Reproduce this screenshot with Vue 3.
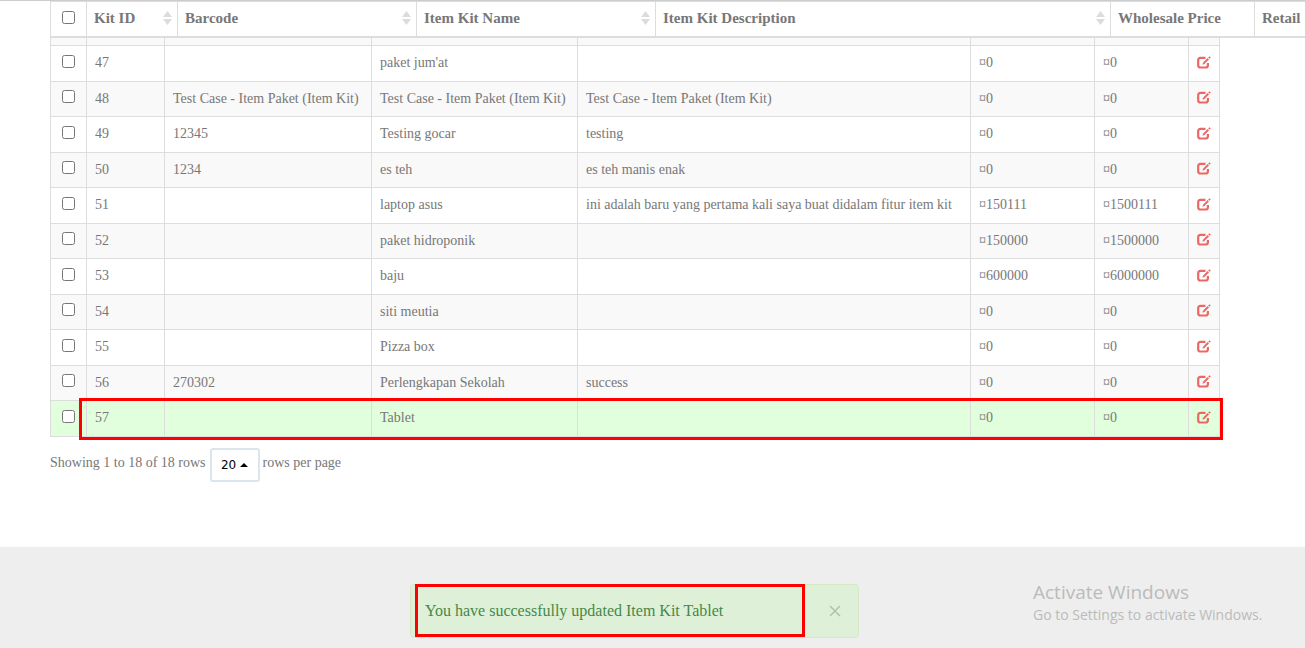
<script setup>
import { ref } from 'vue'

const columns = [
  { label: 'Kit ID', cls: 'h-id', sortable: true },
  { label: 'Barcode', cls: 'h-barcode', sortable: true },
  { label: 'Item Kit Name', cls: 'h-name', sortable: true },
  { label: 'Item Kit Description', cls: 'h-desc', sortable: true },
  { label: 'Wholesale Price', cls: 'h-whole', sortable: false },
  { label: 'Retail', cls: 'h-retail', sortable: false }
]

const test = 'Test Case - Item Paket (Item Kit)'
const rows = ref([
  { id: 47, barcode: '', name: "paket jum'at", desc: '', whole: '¤0', retail: '¤0' },
  { id: 48, barcode: test, name: test, desc: test, whole: '¤0', retail: '¤0' },
  { id: 49, barcode: '12345', name: 'Testing gocar', desc: 'testing', whole: '¤0', retail: '¤0' },
  { id: 50, barcode: '1234', name: 'es teh', desc: 'es teh manis enak', whole: '¤0', retail: '¤0' },
  { id: 51, barcode: '', name: 'laptop asus', desc: 'ini adalah baru yang pertama kali saya buat didalam fitur item kit', whole: '¤150111', retail: '¤1500111' },
  { id: 52, barcode: '', name: 'paket hidroponik', desc: '', whole: '¤150000', retail: '¤1500000' },
  { id: 53, barcode: '', name: 'baju', desc: '', whole: '¤600000', retail: '¤6000000' },
  { id: 54, barcode: '', name: 'siti meutia', desc: '', whole: '¤0', retail: '¤0' },
  { id: 55, barcode: '', name: 'Pizza box', desc: '', whole: '¤0', retail: '¤0' },
  { id: 56, barcode: '270302', name: 'Perlengkapan Sekolah', desc: 'success', whole: '¤0', retail: '¤0' },
  { id: 57, barcode: '', name: 'Tablet', desc: '', whole: '¤0', retail: '¤0' }
])
const updatedId = 57
</script>

<template>
  <div class="page">
    <div class="head-wrap">
      <table class="head-table">
        <thead>
          <tr>
            <th class="h-check"><input type="checkbox" aria-label="Select all rows" /></th>
            <th v-for="c in columns" :key="c.label" :class="c.cls">
              <div class="th-inner">
                <span>{{ c.label }}</span>
                <svg v-if="c.sortable" class="sort" viewBox="0 0 9 14" aria-hidden="true">
                  <path d="M4.5 0 9 6H0zM0 8h9l-4.500 6z" fill="#dcdcdc" />
                </svg>
              </div>
            </th>
          </tr>
        </thead>
      </table>
    </div>

    <main class="content">
      <div class="table-wrap">
        <table class="body-table">
          <colgroup>
            <col class="c-check" /><col class="c-id" /><col class="c-barcode" /><col class="c-name" />
            <col class="c-desc" /><col class="c-whole" /><col class="c-retail" /><col class="c-edit" />
          </colgroup>
          <tbody>
            <tr class="cut"><td v-for="n in 8" :key="n"></td></tr>
            <tr v-for="r in rows" :key="r.id" :class="{ updated: r.id === updatedId }">
              <td class="check"><input type="checkbox" :aria-label="'Select kit ' + r.id" /></td>
              <td>{{ r.id }}</td>
              <td>{{ r.barcode }}</td>
              <td>{{ r.name }}</td>
              <td>{{ r.desc }}</td>
              <td>{{ r.whole }}</td>
              <td>{{ r.retail }}</td>
              <td class="edit">
                <a href="#" :aria-label="'Edit kit ' + r.id">
                  <svg viewBox="0 0 14 13" aria-hidden="true">
                    <path d="M8.500 1.900H3.500Q1.200 1.900 1.200 4.200V9.200Q1.200 11.500 3.500 11.500H8.500Q10.900 11.500 10.900 9.200V7" fill="none" stroke="#eb6864" stroke-width="2.200" />
                    <path d="M5.400 8.800 6 6.700 10.600 2 12 3.400 7.400 8.100zM11.200 1.400 12.400.3 13.800 1.600 12.600 2.800z" fill="#eb6864" />
                  </svg>
                </a>
              </td>
            </tr>
          </tbody>
        </table>
        <div class="mark row-mark"></div>
      </div>

      <div class="pager">
        <span>Showing 1 to 18 of 18 rows</span>
        <button type="button" class="size">20<i class="caret"></i></button>
        <span>rows per page</span>
      </div>
    </main>

    <footer class="footer">
      <div class="alert" role="alert">
        <span>You have successfully updated Item Kit Tablet</span>
        <button type="button" class="close" aria-label="Close">
          <svg viewBox="0 0 12 12" aria-hidden="true">
            <path d="M1 1 11 11M11 1 1 11" stroke="#b0c2aa" stroke-width="1.500" fill="none" />
          </svg>
        </button>
        <div class="mark alert-mark"></div>
      </div>
      <div class="watermark">
        <div class="wm-title">Activate Windows</div>
        <div class="wm-text">Go to Settings to activate Windows.</div>
      </div>
    </footer>
  </div>
</template>

<style>
body {
  margin: 0;
  background: #fff;
}
</style>

<style scoped>
* {
  box-sizing: border-box;
}
.page {
  display: flex;
  flex-direction: column;
  min-height: 100vh;
  overflow: hidden;
  font-family: "Liberation Serif", serif;
  font-size: 14px;
  line-height: 20px;
  color: #777;
}
table {
  border-collapse: collapse;
  table-layout: fixed;
}
.head-wrap {
  padding-left: 50px;
  border-top: 1px solid #ccc;
  overflow: hidden;
}
.head-table {
  width: 1400px;
  height: 37px;
}
.head-table th {
  padding: 0 8px 2px 7px;
  border: 1px solid #ddd;
  border-bottom-width: 2px;
  text-align: left;
  font-size: 15px;
  white-space: nowrap;
}
.head-table .h-check {
  width: 36px;
  padding: 0 0 6px;
  text-align: center;
}
.h-id { width: 91px; }
.h-barcode,
.h-name { width: 239px; }
.h-desc { width: 455px; }
.h-whole { width: 144px; }
.th-inner {
  display: flex;
  align-items: center;
  justify-content: space-between;
  margin-right: -3px;
}
.sort {
  width: 9px;
  height: 14px;
}
input {
  width: 13px;
  height: 13px;
  margin: 0;
  vertical-align: middle;
}
.content {
  padding: 0 85px 0 50px;
}
.table-wrap {
  position: relative;
}
.body-table {
  width: 100%;
}
.c-check { width: 36px; }
.c-id { width: 78px; }
.c-barcode { width: 207px; }
.c-name { width: 206px; }
.c-whole { width: 124px; }
.c-retail { width: 94px; }
.c-edit { width: 31px; }
.body-table td {
  height: 36px;
  padding: 0 8px;
  border: 1px solid #ddd;
  white-space: nowrap;
}
.body-table tr:nth-child(odd) td {
  height: 35px;
  background: #f9f9f9;
}
.body-table .cut:nth-child(odd) td {
  height: 7px;
  padding: 0;
  border-top: 0;
}
.body-table tr.updated:nth-child(n) td {
  background: #e1ffdd;
}
.body-table .check {
  padding: 0 0 5px;
  text-align: center;
}
.body-table .edit {
  padding: 0 0 2px;
  text-align: center;
}
.edit svg {
  display: block;
  width: 14px;
  height: 13px;
  margin: 0 auto;
}
.mark {
  position: absolute;
  border: 3px solid #f00;
  pointer-events: none;
}
.row-mark {
  left: 29px;
  right: -3px;
  bottom: -3px;
  height: 42px;
}
.pager {
  display: flex;
  align-items: center;
  padding-top: 11px;
}
.pager span {
  padding-bottom: 4px;
}
.size {
  display: flex;
  align-items: center;
  justify-content: center;
  gap: 4px;
  width: 50px;
  height: 34px;
  margin: 0 3px 0 4px;
  padding: 0;
  border: 2px solid #dce4ec;
  border-radius: 3px;
  background: #fff;
  color: #000;
  font-family: "DejaVu Sans", sans-serif;
  font-size: 12px;
}
.caret {
  border-right: 4px solid transparent;
  border-bottom: 4px solid #000;
  border-left: 4px solid transparent;
}
.footer {
  position: relative;
  flex: 1;
  margin-top: 65px;
  padding: 37px 0 10px;
  background: #eee;
}
.alert {
  position: relative;
  display: flex;
  align-items: center;
  justify-content: space-between;
  width: 449px;
  height: 54px;
  margin: 0 auto;
  left: -18px;
  padding: 0 17px 0 14px;
  border: 1px solid #d6e9c6;
  border-radius: 4px;
  background: #dff0d8;
  color: #468847;
  font-size: 16px;
}
.close {
  display: flex;
  padding: 0;
  border: 0;
  background: none;
}
.close svg {
  width: 12px;
  height: 12px;
}
.alert-mark {
  top: -1px;
  left: 4px;
  width: 390px;
  height: 53px;
}
.watermark {
  position: absolute;
  top: 33px;
  right: 36px;
  width: 236px;
  font-family: "Open Sans", "Noto Sans", sans-serif;
  color: #bbb;
  white-space: nowrap;
}
.wm-title {
  font-size: 19px;
  line-height: 24px;
}
.wm-text {
  font-size: 14px;
  line-height: 22px;
}
</style>
